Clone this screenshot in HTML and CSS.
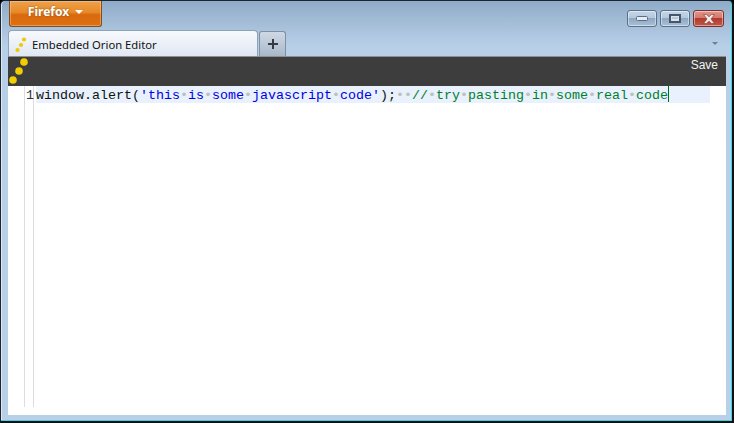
FILE: index.html
```html
<!DOCTYPE html>
<html lang="en">
<head>
<meta charset="utf-8">
<title>Embedded Orion Editor</title>
<link rel="stylesheet" href="styles.css">
</head>
<body>
<div class="window">
  <div class="titlebar">
    <button class="ff-button">Firefox <span class="ff-caret"></span></button>
    <div class="caption">
      <span class="cap"><svg width="12" height="5" viewBox="0 0 12 5"><rect x="0.5" y="0.5" width="11" height="4" rx="1" fill="#e6ebf2" stroke="#5a6d85"/></svg></span>
      <span class="cap"><svg width="12" height="9" viewBox="0 0 12 9"><rect x="1" y="1" width="10" height="7" fill="#dbe3ec" stroke="#46566c" stroke-width="2"/><rect x="3" y="3" width="6" height="2" fill="#b9c8d9"/></svg></span>
      <span class="cap cap-close"><svg width="12" height="10" viewBox="0 0 12 10"><path d="M.5.500h3L6 2.800 8.500.500h3L8 5l3.500 4.500h-3L6 7.200 3.500 9.500h-3L4 5z" fill="#f2e9e8" stroke="#7c3a34" stroke-width=".6"/></svg></span>
    </div>
  </div>
  <div class="tabstrip">
    <div class="tab">
      <svg class="tab-icon" width="14" height="16" viewBox="0 0 14 16"><circle cx="9" cy="2.500" r="2.100" fill="#f0c808"/><circle cx="6" cy="8" r="2.100" fill="#f0c808"/><circle cx="2.500" cy="13" r="2.100" fill="#f0c808"/></svg>
      <span>Embedded Orion Editor</span>
    </div>
    <div class="newtab"><svg width="12" height="12" viewBox="0 0 12 12"><path d="M6 1v10M1 6h10" stroke="#333a44" stroke-width="2"/></svg></div>
    <div class="tab-menu"></div>
  </div>
  <div class="content">
    <div class="toolbar">
      <svg class="logo" width="26" height="29" viewBox="0 0 26 29"><circle cx="16" cy="5" r="3.800" fill="#f2ce00"/><circle cx="11" cy="14" r="3.800" fill="#f2ce00"/><circle cx="5" cy="23" r="3.800" fill="#f2ce00"/></svg>
      <span class="save">Save</span>
    </div>
    <div class="editor">
      <div class="gutter"><span class="ln">1</span></div>
      <div class="ruler"></div>
      <div class="code">
        <div class="line"><span class="pl">window.alert(</span><span class="str">'this<i>•</i>is<i>•</i>some<i>•</i>javascript<i>•</i>code'</span><span class="pl">);</span><i>••</i><span class="cm">//</span><i>•</i><span class="cm">try<i>•</i>pasting<i>•</i>in<i>•</i>some<i>•</i>real<i>•</i>code</span><span class="caret"></span></div>
      </div>
    </div>
  </div>
</div>
</body>
</html>
```
FILE: styles.css
```css
* { box-sizing: border-box; }
html, body { margin: 0; padding: 0; }
body { width: 734px; height: 423px; overflow: hidden; background: #000; }
.window {
  width: 734px; height: 423px;
  display: flex; flex-direction: column;
  padding: 1px 6px 6px 6px;
  border: 1px solid #1c2530;
  border-bottom: 2px solid #111;
  border-right: 2px solid #111;
  box-shadow: inset 0 -1px 0 #35d8e8, inset -1px 0 0 #35d8e8, inset 1px 0 0 #dfe9f3;
  border-radius: 5px 5px 0 0;
  background: linear-gradient(#8fabc8 0, #a3bcd6 20px, #b8cfe8 45px, #b9d0e9 100%);
  font-family: "Liberation Sans", Arial, sans-serif;
}
.titlebar { height: 28px; display: flex; justify-content: space-between; align-items: flex-start; flex: none; }
.ff-button {
  width: 93px; height: 26px; margin-left: 2px; margin-top: -1px; padding: 0 0 4px;
  border: 1px solid #7d4f22; border-top: 0; border-radius: 0 0 3px 3px;
  background: linear-gradient(#eea14b 0, #e88a28 45%, #d9690f 55%, #dd7012 100%);
  box-shadow: inset 0 0 0 1px rgba(255,230,190,.35);
  color: #fff; font: bold 12px "Noto Sans", "Open Sans", sans-serif; text-shadow: 0 0 2px #8a4a10;
  display: flex; align-items: center; justify-content: center; gap: 6px;
}
.ff-caret { width: 0; height: 0; border: 4px solid transparent; border-top: 4px solid #fff; border-bottom: 0; }
.caption { display: flex; gap: 3px; margin-top: 8px; margin-right: 2px; }
.cap {
  width: 30px; height: 17px; display: flex; align-items: center; justify-content: center;
  border: 1px solid #5b6f88; border-radius: 3px;
  background: linear-gradient(#c5d6e8 0, #b4c8dd 45%, #8fa8c3 50%, #a9c0d8 100%);
  box-shadow: inset 0 0 0 1px rgba(255,255,255,.45);
}
.cap-close {
  width: 31px;
  border-color: #7a2f2a;
  background: linear-gradient(#e0958a 0, #d37a6d 45%, #b23a2e 50%, #c4574a 100%);
}
.tabstrip { height: 26px; display: flex; align-items: flex-end; flex: none; position: relative; margin-left: 1px; }
.tab {
  width: 250px; height: 26px; flex: none;
  display: flex; align-items: center; gap: 3px; padding-left: 6px; padding-top: 2px;
  border: 1px solid #8ea2b8; border-bottom: 0; border-radius: 4px 4px 0 0;
  background: linear-gradient(#f7f9fc 0, #ecf1f8 50%, #dfe7f3 100%);
  font: 11.25px "Noto Sans", "Open Sans", sans-serif; color: #111;
}
.tab-icon { flex: none; }
.newtab {
  width: 27px; height: 25px; margin-left: 1px; flex: none;
  display: flex; align-items: center; justify-content: center;
  border: 1px solid #7f90a4; border-bottom: 0; border-radius: 3px 3px 0 0;
  background: linear-gradient(#cfd9e5, #a9b8c9);
}
.tab-menu {
  position: absolute; right: 8px; top: 12px;
  width: 0; height: 0; border: 3px solid transparent; border-top: 3px solid #6f7f90; border-bottom: 0;
}
.content {
  flex: 1; min-height: 0; display: flex; flex-direction: column;
  background: #fff; border-top: 1px solid #8e8e8e; margin-left: 1px;
}
.toolbar {
  height: 29px; flex: none; background: #3d3d3d; display: flex; justify-content: flex-end; align-items: flex-start; overflow: hidden;
  position: relative; padding: 1px 8px 0 0;
}
.logo { position: absolute; left: 0; top: 0; }
.save { color: #f2f2f2; font-size: 12px; line-height: 15px; }
.editor { flex: 1; min-height: 0; display: flex; padding-bottom: 8px; }
.gutter { width: 17px; flex: none; border-left: 1px solid #dcdcdc; margin-left: 16px; position: relative; }
.ln { position: absolute; left: 1px; top: 1px; width: 8px; font: 13.330px/17px "Liberation Mono", monospace; color: #333; }
.ruler { width: 1px; flex: none; background: #dcdcdc; margin-left: -8px; }
.code { flex: 1; min-width: 0; padding: 0 16px 0 2px; font: 13.330px/19px "Liberation Mono", "Courier New", monospace; }
.line { height: 17px; background: #e8f1fc; white-space: pre; color: #111; }
.line i { font-style: normal; color: #c0c0c0; }
.str { color: #0000e6; }
.cm { color: #007f2e; }
.caret { display: inline-block; width: 1px; height: 16px; background: #006b20; vertical-align: top; }
```
